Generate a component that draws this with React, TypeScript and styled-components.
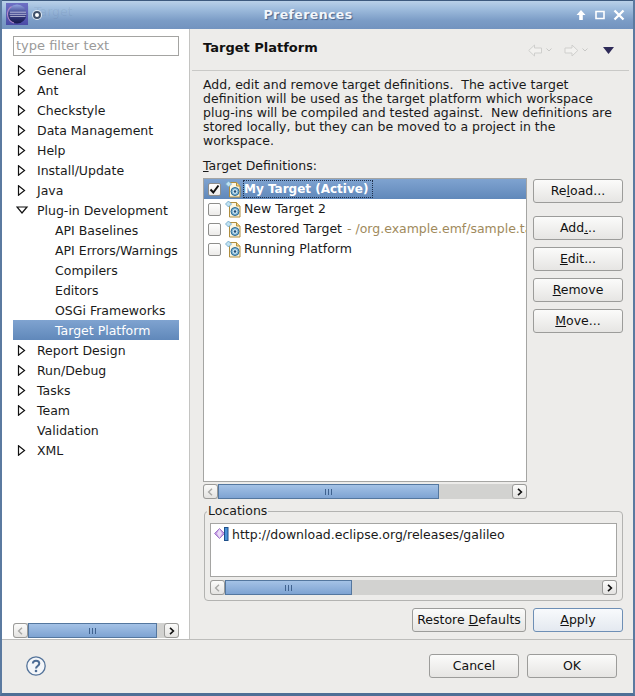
import React from "react";
import styled, { createGlobalStyle } from "styled-components";

const Global = createGlobalStyle`
  html, body { margin: 0; padding: 0; background: #4a6484; }
  body { font-family: "DejaVu Sans", sans-serif; font-size: 12.5px; color: #1a1a1a; }
  * { box-sizing: border-box; }
`;

const Window = styled.div`
  position: relative; width: 635px; height: 696px; display: flex; flex-direction: column;
  background: #edecea; border-left: 2px solid #5b7aa0; border-right: 2px solid #5b7aa0; border-bottom: 3px solid #4f6f96; overflow: hidden;
`;
const TitleBar = styled.div`
  position: relative; height: 29px; flex: none; margin: 0 -2px; display: flex; align-items: center; padding: 0 10px 2px 6px;
  background: linear-gradient(#b9d0e8, #9dbbdc 30%, #7b9cc6 70%, #7293bf); border-top: 1px solid #3d5a7e;
`;
const Ghost = styled.div`
  position: absolute; left: 22px; top: 3px; font-size: 12.5px; line-height: 16px; color: rgba(40, 60, 90, 0.08); white-space: nowrap;
`;
const LogoBox = styled.div`position: relative; width: 22px; height: 22px; flex: none; background: #5b5fb0;`;
const Pin = styled.div`
  position: relative; top: 1px; width: 8px; height: 8px; border-radius: 50%; background: #fff; border: 2px solid #3f4f68; margin-left: 5px; flex: none;
  box-shadow: 0 0 0 1px #e4ecf4;
`;
const WinTitle = styled.div`
  flex: 1; text-align: center; font-weight: bold; font-size: 12.5px; letter-spacing: 0.4px; color: #f2f6fb;
  text-shadow: 1px 1px 1px #46628a;
`;
const WinControls = styled.div`display: flex; gap: 4px; align-items: center; margin-top: 2px;`;

const Main = styled.div`flex: 1; display: flex; min-height: 0; border-bottom: 1px solid #bdbdbb;`;
const Sidebar = styled.div`
  width: 188px; flex: none; background: #fff; display: flex; flex-direction: column; padding: 7px 10px 1px 11px; border-right: 1px solid #c4c4c2;
`;
const Filter = styled.div`
  height: 20px; border: 1px solid #a4a4a2; color: #9a9a9a; padding-left: 2px; line-height: 17px; flex: none; font-size: 13px;
`;
const Tree = styled.div`flex: 1; padding-top: 4px;`;
const Row = styled.div<{ $selected?: boolean; $level?: number }>`
  height: 20px; display: flex; align-items: center; padding-left: ${(p) => (p.$level === 2 ? 42 : 24)}px; position: relative; white-space: nowrap;
  ${(p) => p.$selected && "background: linear-gradient(#7fa3d0, #6088ba); color: #fff;"}
`;
const Arrow = styled.svg`position: absolute; left: 4px; top: 5px;`;

const Content = styled.div`flex: 1; min-width: 0; display: flex; flex-direction: column;`;
const Header = styled.div`
  height: 42px; flex: none; margin: 0 4px 0 2px; padding: 0 11px; display: flex; align-items: center; border-bottom: 1px solid #c9c9c7;
`;
const PageTitle = styled.div`flex: 1; font-weight: bold; font-size: 13px; color: #111; padding-bottom: 5px;`;
const NavIcons = styled.div`display: flex; align-items: center; padding: 1px 4px 0 0;`;
const Page = styled.div`flex: 1; display: flex; flex-direction: column; padding: 7px 10px 0 13px; min-height: 0;`;
const Desc = styled.div`line-height: 14px; white-space: pre; height: 70px; margin-bottom: 10px;`;
const Label = styled.div`height: 16px; line-height: 16px; margin-bottom: 4px;`;
const U = styled.span`text-decoration: underline;`;
const DefArea = styled.div`display: flex; gap: 6px; height: 321px; flex: none;`;
const DefLeft = styled.div`width: 324px; flex: none; display: flex; flex-direction: column; gap: 2px;`;
const ListBox = styled.div`
  flex: 1; background: #fff; border: 1px solid #a5a5a3; padding: 0; overflow: hidden; min-height: 0;
`;
const DefRow = styled.div<{ $selected?: boolean }>`
  height: 20px; display: flex; align-items: center; padding-left: 4px; white-space: nowrap;
  ${(p) => p.$selected && "background: linear-gradient(#7fa3d0, #6088ba); color: #fff; font-weight: bold; font-size: 12px;"}
`;
const RowText = styled.span`margin-bottom: 2px;`;
const Check = styled.div`
  width: 13px; height: 13px; flex: none; border: 1px solid #8e8e8c; border-radius: 2px; background: linear-gradient(#fff, #ecebe9); display: flex; align-items: center; justify-content: center;
`;
const DefIcon = styled.svg`flex: none; margin-left: 4px; margin-right: 2px;`;
const FocusLabel = styled.span`outline: 1px dotted #1f2f4a; padding: 1px 4px 1px 0;`;
const Muted = styled.span`color: #a08a5c; margin-left: 1px;`;
const Buttons = styled.div`width: 90px; flex: none; display: flex; flex-direction: column; gap: 7px; padding-top: 1px;`;
const Btn = styled.div<{ $w?: number; $default?: boolean; $gapAfter?: boolean }>`
  width: ${(p) => p.$w ?? 90}px; height: 24px; flex: none; display: flex; align-items: center; justify-content: center; white-space: nowrap; padding-bottom: 1px;
  border: 1px solid ${(p) => (p.$default ? "#6e8fb5" : "#9c9c9a")}; border-radius: 3px; color: #111;
  background: ${(p) => (p.$default ? "linear-gradient(#f8fafc, #e4e9f0)" : "linear-gradient(#fbfbfa, #e6e5e3)")};
  ${(p) => p.$gapAfter && "margin-bottom: 6px;"}
`;
const Track = styled.div<{ $w: number; $btn: number }>`
  height: 15px; width: ${(p) => p.$w}px; flex: none; display: flex; background: #d2d2d0; border-radius: 3px;
`;
const SBtn = styled.div<{ $btn: number }>`
  width: ${(p) => p.$btn}px; flex: none; border: 1px solid #9a9a98; background: linear-gradient(#fbfbfa, #e4e3e1); display: flex; align-items: center; justify-content: center; border-radius: 3px;
`;
const Thumb = styled.div<{ $w: number }>`
  width: ${(p) => p.$w}px; flex: none; background: linear-gradient(#a4c2e6, #7ea3d2); border: 1px solid #54779f; display: flex; align-items: center; justify-content: center; gap: 2px;
`;
const Grip = styled.i`display: block; width: 1px; height: 6px; background: #3f628f;`;
const Spacer = styled.div`flex: 1;`;

const Group = styled.div`
  position: relative; height: 90px; width: 419px; margin: 12px 0 0 1px; flex: none; border: 1px solid #b3b3b1; border-radius: 4px; padding: 11px 5px 0 5px;
`;
const Legend = styled.div`position: absolute; left: 2px; top: -9px; background: #edecea; padding: 0 1px; height: 16px; line-height: 16px;`;
const LocBox = styled.div`height: 54px; background: #fff; border: 1px solid #a5a5a3; display: flex; align-items: flex-start; padding: 2px 0 0 3px; margin-bottom: 3px;`;
const LocRow = styled.div`display: flex; align-items: center; gap: 3px; height: 16px;`;
const Actions = styled.div`display: flex; justify-content: flex-end; gap: 7px; margin-top: 7px; flex: none;`;

const Footer = styled.div`
  height: 53px; flex: none; display: flex; align-items: center; padding: 0 16px 2px 24px; gap: 8px;
`;
const Help = styled.svg`flex: none; margin-right: auto;`;

const Left = () => (
  <svg width="7" height="8" viewBox="0 0 7 8"><path d="M5 .8 1.600 4 5 7.200" fill="none" stroke="#a8a8a6" strokeWidth="1.400" /></svg>
);
const Right = () => (
  <svg width="7" height="8" viewBox="0 0 7 8"><path d="M2 .8 5.400 4 2 7.200" fill="none" stroke="#111" strokeWidth="1.600" /></svg>
);

const Scroll: React.FC<{ w: number; thumb: number; btn?: number }> = ({ w, thumb, btn = 15 }) => (
  <Track $w={w} $btn={btn}>
    <SBtn $btn={btn}><Left /></SBtn>
    <Thumb $w={thumb}><Grip /><Grip /><Grip /></Thumb>
    <Spacer />
    <SBtn $btn={btn}><Right /></SBtn>
  </Track>
);

const Closed = () => (
  <Arrow width="9" height="11" viewBox="0 0 9 11"><path d="M1.500.8 7.500 5.500 1.500 10.200Z" fill="#fff" stroke="#111" strokeWidth="1.200" /></Arrow>
);
const OpenArrow = styled(Arrow)`left: 3px; top: 6px;`;
const Open = () => (
  <OpenArrow width="13" height="9" viewBox="0 0 13 9"><path d="M1 1h10L6 7Z" fill="#fff" stroke="#111" strokeWidth="1.200" /></OpenArrow>
);

const TargetIcon = () => (
  <DefIcon width="17" height="18" viewBox="0 0 17 18">
    <path d="M4.500 2.500h7l3.500 3.500v11h-10.500Z" fill="#fdf6e0" stroke="#b08e3e" />
    <path d="M11.500 2.500v3.500h3.500" fill="#f5d88a" stroke="#b08e3e" />
    <circle cx="10" cy="11.500" r="4" fill="#7fb4d4" stroke="#2a6a94" />
    <circle cx="10" cy="11.500" r="2.200" fill="#e4f2f8" />
    <circle cx="10" cy="11.500" r="1.300" fill="#1e4f78" />
    <path d="M3.500 1 6.500 4 3.500 7 .5 4Z" fill="#bfe2f2" stroke="#6ba3c8" strokeWidth=".8" />
  </DefIcon>
);

const top = ["General", "Ant", "Checkstyle", "Data Management", "Help", "Install/Update", "Java"];
const children = ["API Baselines", "API Errors/Warnings", "Compilers", "Editors", "OSGi Frameworks"];
const after = ["Report Design", "Run/Debug", "Tasks", "Team"];

export default function App() {
  return (
    <Window>
      <Global />
      <TitleBar>
        <Ghost>d Target</Ghost>
        <LogoBox>
          <svg width="22" height="22" viewBox="0 0 22 22">
            <defs>
              <linearGradient id="lg" x1="0" y1="0" x2="0" y2="1">
                <stop offset="0" stopColor="#6d6fc4" />
                <stop offset="1" stopColor="#4a4ba6" />
              </linearGradient>
              <linearGradient id="ball" x1="0" y1="0" x2="0" y2="1">
                <stop offset="0" stopColor="#93a5e0" />
                <stop offset=".45" stopColor="#3f4590" />
                <stop offset="1" stopColor="#16184c" />
              </linearGradient>
            </defs>
            <rect width="22" height="22" fill="url(#lg)" />
            <circle cx="11" cy="11" r="9.500" fill="url(#ball)" />
            <path d="M5.500 3.500A9.300 9.300 0 0 0 8 20" fill="none" stroke="#b088c8" strokeWidth="1.100" />
            <path d="M4 9.200h16M3.600 11.300h16.700M4.200 13.400h15.300" stroke="#eeeefa" strokeWidth=".8" strokeOpacity=".85" />
          </svg>
        </LogoBox>
        <Pin />
        <WinTitle>Preferences</WinTitle>
        <WinControls>
          <svg width="12" height="12" viewBox="0 0 12 12"><path d="M6 1 10.500 6H7.800v5H4.200V6H1.500Z" fill="#fff" /></svg>
          <svg width="12" height="12" viewBox="0 0 12 12" style={{ marginLeft: 3 }}><path d="M2 2.500h8v7H2Z" fill="none" stroke="#fff" strokeWidth="1.600" /></svg>
          <svg width="12" height="12" viewBox="0 0 12 12" style={{ marginLeft: 3 }}><path d="M1.500 1.500 10.500 10.500M10.500 1.500 1.500 10.500" stroke="#fff" strokeWidth="2.300" /></svg>
        </WinControls>
      </TitleBar>
      <Main>
        <Sidebar>
          <Filter>type filter text</Filter>
          <Tree>
            {top.map((t) => <Row key={t}><Closed />{t}</Row>)}
            <Row><Open />Plug-in Development</Row>
            {children.map((t) => <Row key={t} $level={2}>{t}</Row>)}
            <Row $level={2} $selected>Target Platform</Row>
            {after.map((t) => <Row key={t}><Closed />{t}</Row>)}
            <Row>Validation</Row>
            <Row><Closed />XML</Row>
          </Tree>
          <Scroll w={166} thumb={129} />
        </Sidebar>
        <Content>
          <Header>
            <PageTitle>Target Platform</PageTitle>
            <NavIcons>
              <svg width="24" height="13" viewBox="0 0 24 13"><path d="M.7 6.500 6.500 1v3h7v5h-7v3Z" fill="#f2f1ef" stroke="#cfcfcd" /><path d="M18.500 4.500l2.500 2.500 2.500-2.500" fill="none" stroke="#c8c8c6" /></svg>
              <svg width="24" height="13" viewBox="0 0 24 13" style={{ marginLeft: 12 }}><path d="M13.800 6.500 8 1v3H1v5h7v3Z" fill="#f2f1ef" stroke="#cfcfcd" /><path d="M18.500 4.500l2.500 2.500 2.500-2.500" fill="none" stroke="#c8c8c6" /></svg>
              <svg width="11" height="7" viewBox="0 0 11 7" style={{ marginLeft: 15 }}><path d="M0 0h11L5.500 7Z" fill="#2e2a58" /></svg>
            </NavIcons>
          </Header>
          <Page>
            <Desc>{"Add, edit and remove target definitions.  The active target\ndefinition will be used as the target platform which workspace\nplug-ins will be compiled and tested against.  New definitions are\nstored locally, but they can be moved to a project in the\nworkspace."}</Desc>
            <Label><U>T</U>arget Definitions:</Label>
            <DefArea>
              <DefLeft>
                <ListBox>
                  <DefRow $selected>
                    <Check>
                      <svg width="11" height="11" viewBox="0 0 11 11"><path d="M1.500 5.500 4.300 8.500 9.500 1.500" fill="none" stroke="#111" strokeWidth="2" /></svg>
                    </Check>
                    <TargetIcon />
                    <FocusLabel>My Target (Active)</FocusLabel>
                  </DefRow>
                  <DefRow><Check /><TargetIcon /><RowText>New Target 2</RowText></DefRow>
                  <DefRow><Check /><TargetIcon /><RowText>Restored Target<Muted> - /org.example.emf/sample.target</Muted></RowText></DefRow>
                  <DefRow><Check /><TargetIcon /><RowText>Running Platform</RowText></DefRow>
                </ListBox>
                <Scroll w={324} thumb={221} btn={15} />
              </DefLeft>
              <Buttons>
                <Btn $gapAfter><span>Re<U>l</U>oad...</span></Btn>
                <Btn><span>Add<U>.</U>..</span></Btn>
                <Btn><span><U>E</U>dit...</span></Btn>
                <Btn><span><U>R</U>emove</span></Btn>
                <Btn><span><U>M</U>ove...</span></Btn>
              </Buttons>
            </DefArea>
            <Group>
              <Legend>Locations</Legend>
              <LocBox>
                <LocRow>
                  <svg width="15" height="16" viewBox="0 0 15 16">
                    <path d="M5.500 2.500 10.500 7.500 5.500 12.500.5 7.500Z" fill="#c49ae0" stroke="#a078cc" />
                    <path d="M5.500 3 8 7.500 5.500 12 3 7.500Z" fill="#eadcf7" />
                    <rect x="10.500" y="1.500" width="3.500" height="13" fill="#4a92d8" stroke="#1d4f8a" />
                  </svg>
                  <span>http://download.eclipse.org/releases/galileo</span>
                </LocRow>
              </LocBox>
              <Scroll w={407} thumb={127} btn={15} />
            </Group>
            <Actions>
              <Btn $w={114}><span>Restore <U>D</U>efaults</span></Btn>
              <Btn $default><span><U>A</U>pply</span></Btn>
            </Actions>
          </Page>
        </Content>
      </Main>
      <Footer>
        <Help width="20" height="20" viewBox="0 0 20 20">
          <circle cx="10" cy="10" r="9.200" fill="#f4f6f9" stroke="#54739a" strokeWidth="1.300" />
          <path d="M6.800 7.500C7 5.500 8.500 4.700 10 4.700c2 0 3.300 1.200 3.300 2.800 0 2.500-3.300 2.500-3.300 5" fill="none" stroke="#4d6c94" strokeWidth="2" />
          <circle cx="10" cy="15" r="1.300" fill="#4d6c94" />
        </Help>
        <Btn>Cancel</Btn>
        <Btn>OK</Btn>
      </Footer>
    </Window>
  );
}
